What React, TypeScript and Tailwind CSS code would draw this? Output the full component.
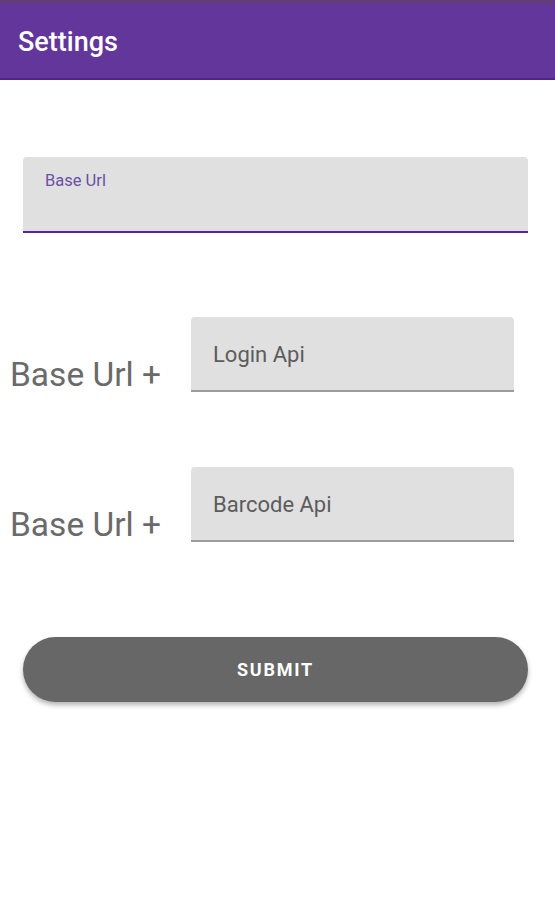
import React from "react";

type ApiRowProps = {
    placeholder: string
}

function ApiRow({placeholder}: ApiRowProps) {
    return (
        <div className="flex items-end pl-[10px]">
            <div className="w-[181px] mb-[1px] text-[33.5px] leading-none text-[#6a6a6a]">Base Url +</div>
            <div className="w-[323px] h-[75px] bg-[#e0e0e0] rounded-t-[4px] border-b-2 border-[#9c9c9c] pl-[22px] pt-[27px]">
                <p className="text-[22px] leading-none text-[#5c5c5c]">{placeholder}</p>
            </div>
        </div>
    )
}

export default function App() {
    return (
        <div className="w-[555px] h-[900px] bg-white font-['Roboto',sans-serif]">
            <div className="h-[4px] bg-[#653c7b]"></div>
            <div className="h-[76px] bg-[#62369a] border-b-2 border-[#4f2587] pl-[18px] pt-[25px]">
                <h1 className="text-[27px] leading-none font-medium text-white">Settings</h1>
            </div>

            <div className="mt-[77px] mx-[23px] w-[505px] h-[76px] bg-[#e0e0e0] rounded-t-[4px] border-b-2 border-[#5a23a0] pl-[22px] pt-[16px]">
                <p className="text-[16.5px] leading-none text-[#6c4fa6]">Base Url</p>
            </div>

            <div className="mt-[84px] flex flex-col gap-[75px]">
                <ApiRow placeholder="Login Api" />
                <ApiRow placeholder="Barcode Api" />
            </div>

            <button className="mt-[95px] mx-[23px] w-[505px] h-[65px] rounded-full bg-[#666766] shadow-[0_3px_5px_rgba(0,0,0,0.3)] flex items-center justify-center">
                <span className="text-[18px] font-bold tracking-[0.1em] text-white">SUBMIT</span>
            </button>
        </div>
    )
}
